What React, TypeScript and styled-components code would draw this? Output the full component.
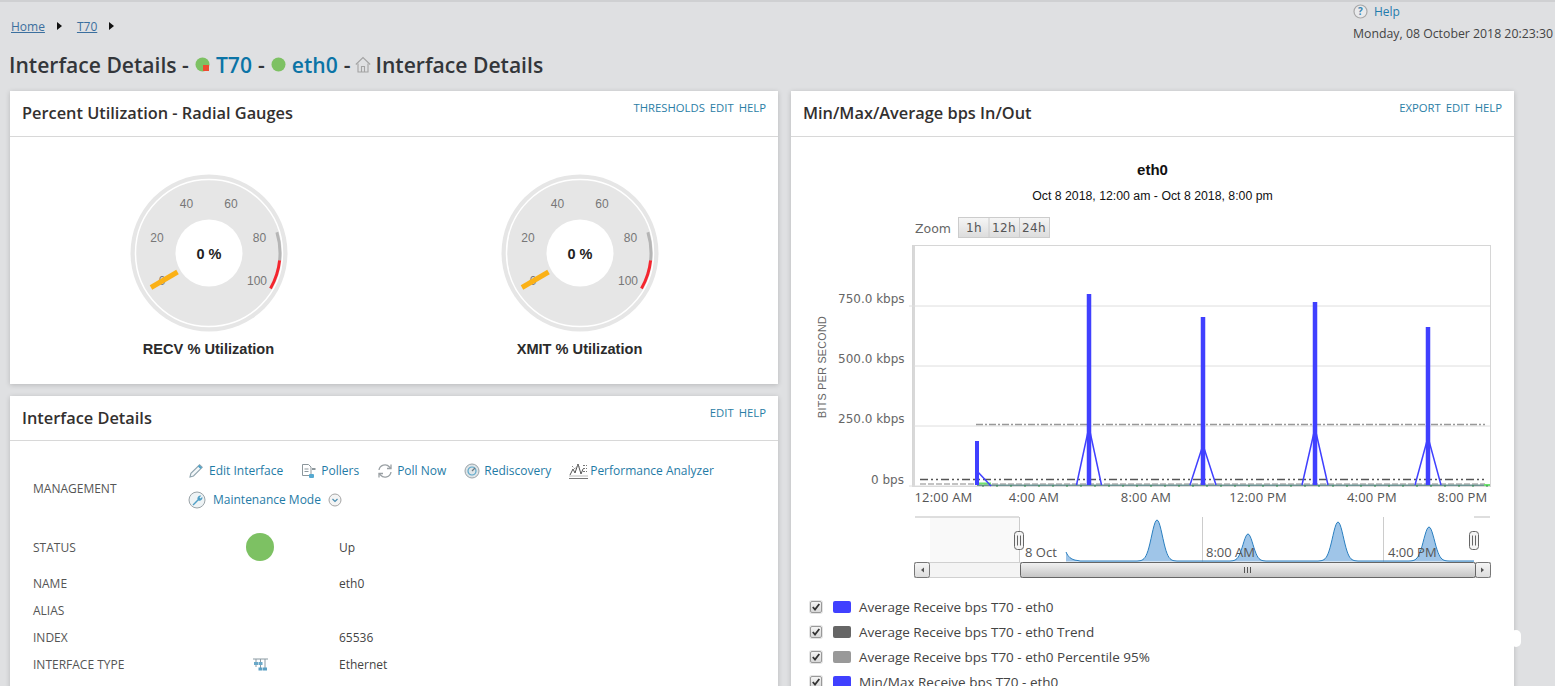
import React from "react";
import styled, { createGlobalStyle } from "styled-components";

const Global = createGlobalStyle`
  html, body { margin: 0; padding: 0; height: 100%; overflow: hidden; background: #dfe0e2; }
  body { font-family: "Open Sans", "Liberation Sans", sans-serif; color: #333; }
  a { text-decoration: none; }
`;

const Page = styled.div`
  height: 686px; overflow: hidden; position: relative; background: #dfe0e2;
  border-top: 2px solid #cfd0d2; box-sizing: border-box;
`;
const TopBar = styled.div`
  height: 48px; display: flex; justify-content: space-between; padding: 0 2px 0 11px;
`;
const Crumbs = styled.nav`
  display: flex; align-items: center; height: 14px; margin-top: 17px; font-size: 12px;
`;
const CrumbLink = styled.a`
  color: #3b6f9e; text-decoration: underline;
`;
const CrumbArrow = styled.span`
  width: 0; height: 0; margin: 0 15px 0 12px; border-left: 5px solid #111;
  border-top: 4px solid transparent; border-bottom: 4px solid transparent;
`;
const TopRight = styled.div`
  display: flex; flex-direction: column; gap: 7px; padding-top: 1px; font-size: 12.3px; width: 200px;
`;
const HelpRow = styled.a`
  display: flex; align-items: center; gap: 6px; color: #1f7cad; height: 16px; font-size: 12px;
`;
const DateText = styled.div`
  color: #444; white-space: nowrap; height: 16px; line-height: 16px;
`;
const TitleRow = styled.h1`
  margin: 0; height: 41px; padding: 0 0 13px 9px; display: flex; align-items: center; gap: 6px;
  box-sizing: border-box;
  font-size: 21.1px; font-weight: 600; color: #33363a; white-space: nowrap;
`;
const TitleLink = styled.a`
  color: #0b74a6;
`;
const TitleHome = styled.span`
  display: flex; margin-left: -2px; margin-right: -1px;
`;
const Columns = styled.div`
  display: grid; grid-template-columns: 768px 723px; column-gap: 13px; padding-left: 10px;
  height: 595px; align-items: stretch;
`;
const LeftColumn = styled.div`
  display: flex; flex-direction: column; gap: 12px; min-height: 0;
`;
const Panel = styled.section<{ $grow?: boolean }>`
  background: #fff; box-shadow: 0 1px 5px rgba(0,0,0,.18);
  ${p => (p.$grow ? "flex: 1; min-height: 0;" : "")}
`;
const PanelHeader = styled.header<{ $height?: number }>`
  height: ${p => p.$height ?? 45}px; display: flex; justify-content: space-between; padding: 0 12px;
  border-bottom: 1px solid #d8d8d8;
`;
const PanelTitle = styled.h2`
  margin: 12px 0 0; font-size: 16.35px; line-height: 20px; font-weight: 600; color: #33302f;
`;
const PanelActions = styled.div`
  display: flex; gap: 5px; padding-top: 9px; font-size: 11.3px; line-height: 15px; color: #2b7ea6;
`;
const GaugeGrid = styled.div`
  display: grid; grid-template-columns: 371px 371px; padding: 36px 0 0 13px; height: 211px;
`;
const GaugeCell = styled.figure`
  margin: 0; display: flex; flex-direction: column; align-items: center;
`;
const GaugeCaption = styled.figcaption`
  margin-top: 6px; font: bold 14.6px/20px "Liberation Sans", Arial, sans-serif; color: #2b2b2b;
`;
const GaugeTick = styled.text`
  font: 12px "Liberation Sans", Arial, sans-serif; fill: #777; text-anchor: middle;
`;
const GaugeValue = styled.text`
  font: bold 14.5px "Liberation Sans", Arial, sans-serif; fill: #222; text-anchor: middle;
`;
const DetailsBody = styled.div`
  padding: 15px 0 0 23px; font-size: 12px; color: #444;
`;
const MgmtRow = styled.div`
  display: grid; grid-template-columns: 155px 1fr; margin-bottom: 19px;
`;
const RowLabel = styled.div`
  font-size: 12px; color: #555; text-transform: uppercase;
`;
const MgmtLabel = styled(RowLabel)`
  align-self: center; padding-top: 6px;
`;
const ActionLine = styled.div`
  display: flex; gap: 18px; height: 29px; align-items: center;
`;
const ActionLink = styled.a<{ $gap?: number }>`
  display: flex; align-items: center; gap: ${p => p.$gap ?? 4}px; color: #1f7ba6; white-space: nowrap; font-size: 12px;
`;
const InfoRow = styled.div<{ $tall?: boolean }>`
  display: grid; grid-template-columns: 213px 28px 1fr; align-items: center;
  height: ${p => (p.$tall ? 28 : 27)}px; margin-bottom: ${p => (p.$tall ? 9 : 0)}px;
`;
const InfoValue = styled.div`
  padding-left: 65px; color: #444;
`;
const StatusDot = styled.span`
  display: block; width: 28px; height: 28px; border-radius: 50%; background: #7dc163;
`;
const IconCell = styled.div`
  display: flex; justify-content: center;
`;
const ChartBody = styled.div`
  padding-top: 24px; display: flex; flex-direction: column;
`;
const ChartTitle = styled.div`
  text-align: center; font: bold 15px/18px "Liberation Sans", Arial, sans-serif; color: #111;
`;
const ChartSub = styled.div`
  text-align: center; margin-top: 8px; font: 12.3px/18px "Liberation Sans", Arial, sans-serif; color: #111;
`;
const ChartSvg = styled.svg`
  display: block; margin-top: 5px;
`;
const AxisText = styled.text`
  font: 12px "DejaVu Sans", sans-serif; fill: #666;
`;
const XText = styled.text`
  font: 13px "Open Sans", sans-serif; fill: #555; text-anchor: middle; letter-spacing: .2px;
`;
const NavText = styled.text`
  font: 13px "Open Sans", sans-serif; fill: #555;
`;
const AxisTitle = styled.text`
  font: 10.7px "Liberation Sans", Arial, sans-serif; fill: #666; text-anchor: middle; letter-spacing: .3px;
`;
const ZoomLabel = styled.text`
  font: 12.5px "DejaVu Sans", sans-serif; fill: #666;
`;
const ZoomBtnText = styled.text`
  font: 12px "DejaVu Sans", sans-serif; fill: #555; text-anchor: middle; letter-spacing: .3px;
`;
const Legend = styled.ul`
  list-style: none; margin: 0; padding: 9px 0 0 19px;
`;
const LegendRow = styled.li`
  display: flex; align-items: center; height: 25px; font-size: 13.5px; color: #444;
`;
const FakeCheck = styled.span`
  width: 12px; height: 12px; border: 1px solid #999; border-radius: 2px; box-sizing: border-box;
  background: linear-gradient(#f4f4f4, #d8d8d8); display: flex; align-items: center; justify-content: center;
  margin-right: 11px; box-shadow: 0 0 0 1px #e4e4e4;
`;
const Swatch = styled.span<{ $color: string }>`
  width: 18px; height: 12px; border-radius: 2px; background: ${p => p.$color}; margin-right: 8px;
`;
const EdgeBlob = styled.div`
  position: absolute; left: 1511px; top: 628px; width: 10px; height: 17px; border-radius: 5px; background: #fff;
`;

const polar = (r: number, deg: number) => {
  const a = (deg * Math.PI) / 180;
  return [r * Math.cos(a), r * Math.sin(a)];
};
const arc = (r: number, from: number, to: number) => {
  const [x1, y1] = polar(r, from);
  const [x2, y2] = polar(r, to);
  return `M${x1.toFixed(2)} ${y1.toFixed(2)}A${r} ${r} 0 0 1 ${x2.toFixed(2)} ${y2.toFixed(2)}`;
};

const ticks: [string, number, number][] = [
  ["0", -47, 32], ["20", -52, -11], ["40", -22.5, -45], ["60", 22, -45], ["80", 50.5, -11], ["100", 48, 32],
];

const Gauge = ({ caption }: { caption: string }) => (
  <GaugeCell>
    <svg width="160" height="160" viewBox="-80 -80 160 160">
      <circle r="78.500" fill="#e6e6e6" />
      <circle r="73.500" fill="none" stroke="#fff" strokeWidth="1.500" />
      {ticks.map(([t, x, y]) => <GaugeTick key={t} x={x} y={y}>{t}</GaugeTick>)}
      <circle r="33.500" fill="#fff" />
      <path d={arc(71, -17, 6)} fill="none" stroke="#b5b5b5" strokeWidth="3" />
      <path d={arc(71, 6, 30)} fill="none" stroke="#f4262f" strokeWidth="3" />
      <path d="M-58 34.500L-31.500 19" stroke="#fbb116" strokeWidth="5" />
      <GaugeValue x="0" y="6">0 %</GaugeValue>
    </svg>
    <GaugeCaption>{caption}</GaugeCaption>
  </GaugeCell>
);

const IconPencil = () => (
  <svg width="16" height="16" viewBox="0 0 16 16" fill="none">
    <path d="M2 14l.9-3.600L11.600 1.800l2.600 2.500-8.700 8.700z" stroke="#8fa3ad" strokeWidth="1.100" fill="#f3f7f9" />
    <path d="M10.600 2.800l2.600 2.500" stroke="#4ba3cb" strokeWidth="2" />
  </svg>
);
const IconPollers = () => (
  <svg width="16" height="16" viewBox="0 0 16 16" fill="none">
    <path d="M1.500 1.500h6l2.500 2.500v8.500h-8.500z" stroke="#8d979c" strokeWidth="1" />
    <path d="M3.500 6h4M3.500 8.500h4" stroke="#8d979c" />
    <rect x="11" y="5" width="3.500" height="2" fill="#8d979c" />
    <rect x="8" y="11" width="5" height="4" rx="1" fill="#56a9d0" />
  </svg>
);
const IconPoll = () => (
  <svg width="16" height="16" viewBox="0 0 16 16" fill="none" stroke="#9aa0a4" strokeWidth="1.300">
    <path d="M2 7a6 6 0 0 1 10.500-3l1.500 1.500M14 9a6 6 0 0 1-10.500 3L2 10.500" />
    <path d="M14 1.500v4h-4M2 14.500v-4h4" />
  </svg>
);
const IconRediscover = () => (
  <svg width="16" height="16" viewBox="0 0 16 16" fill="none">
    <circle cx="8" cy="8" r="7" fill="#dfe5e8" stroke="#9aa3a8" />
    <circle cx="8" cy="8" r="4" stroke="#5aa7ca" strokeWidth="1.200" />
    <path d="M8 8l3-3" stroke="#6f7a80" strokeWidth="1.300" />
  </svg>
);
const IconPerf = () => (
  <svg width="19" height="16" viewBox="0 0 19 16" fill="none" stroke="#555" strokeWidth="1">
    <path d="M0 15.500h19" stroke="#777" />
    <path d="M0 13h19" stroke="#bbb" />
    <path d="M1 12l3-6 2 4 3-9 3 10 2-5" />
    <path d="M3 3l3 3 3-4 2 3" stroke="#888" strokeDasharray="1.500 1" />
    <path d="M14 2.500h4M14 5.500h4M14 8.500h4" stroke="#777" strokeDasharray="2 1" />
  </svg>
);
const IconWrench = () => (
  <svg width="18" height="18" viewBox="0 0 18 18" fill="none">
    <circle cx="9" cy="9" r="8" fill="#eef3f5" stroke="#9aa3a8" />
    <path d="M4.500 13.500l5-5a3 3 0 0 1 3.800-3.800L11.500 6.500l1 1 1.800-1.800a3 3 0 0 1-3.800 3.800l-5 5z" fill="#4f9fc6" />
  </svg>
);
const IconChevronCircle = () => (
  <svg width="14" height="14" viewBox="0 0 14 14" fill="none">
    <circle cx="7" cy="7" r="6" fill="#f4f4f4" stroke="#a5a5a5" />
    <path d="M4.500 6l2.500 2.500L9.500 6" stroke="#4a8db0" strokeWidth="1.200" />
  </svg>
);
const IconNetwork = () => (
  <svg width="15" height="13" viewBox="0 0 15 13" fill="none">
    <path d="M0 1h15" stroke="#8a9aa3" />
    <path d="M3 1v3M7.500 1v3M12 1v9M3 7v2M7.500 7v3" stroke="#8a9aa3" />
    <rect x="1" y="4" width="4" height="3" fill="#6aa8c8" />
    <rect x="5.500" y="4" width="4" height="3" fill="#6aa8c8" />
    <rect x="5.500" y="9.500" width="4" height="3" fill="#5b9fc3" />
    <rect x="10" y="9.500" width="4" height="3" fill="#5b9fc3" />
  </svg>
);
const IconHelp = () => (
  <svg width="15" height="15" viewBox="0 0 15 15">
    <circle cx="7.500" cy="7.500" r="6.500" fill="#e9eaec" stroke="#a8a8a8" strokeWidth="1.200" />
    <text x="7.500" y="11" textAnchor="middle" fontSize="10" fontWeight="700" fontFamily="Open Sans" fill="#3a87b3">?</text>
  </svg>
);
const IconHome = () => (
  <svg width="16" height="17" viewBox="0 0 16 17" fill="none" stroke="#a3a3a3" strokeWidth="1.100">
    <path d="M.8 8.500L8 1.500l7.200 7" />
    <path d="M3 7.500v8.500h10V7.500M6.500 16v-5.500h3V16" />
  </svg>
);
const Dot = ({ alarm }: { alarm?: boolean }) => (
  <svg width="15" height="15" viewBox="0 0 15 15">
    <circle cx="7.500" cy="7.500" r="7" fill="#7dc163" />
    {alarm && <rect x="8" y="8" width="6" height="6" fill="#ee4b30" />}
  </svg>
);
const TinyCheck = () => (
  <svg width="10" height="10" viewBox="0 0 10 10" fill="none">
    <path d="M1.800 5l2.200 2.500L8.300 2" stroke="#333" strokeWidth="1.800" />
  </svg>
);

const spikes = [
  { x: 1089, top: 294, peak: 427, w: 12.5 },
  { x: 1203, top: 317, peak: 445, w: 13 },
  { x: 1315, top: 302, peak: 428, w: 13 },
  { x: 1428, top: 327, peak: 437, w: 13 },
];

const bumps = [
  { c: 1157, a: 41, s: 6.5 },
  { c: 1248, a: 27, s: 6 },
  { c: 1338, a: 39, s: 6.5 },
  { c: 1429, a: 34, s: 6.5 },
];
const navY = (x: number) => {
  let v = 561;
  if (x < 1080) v -= 9 * Math.exp(-(x - 1066) / 4);
  bumps.forEach(b => { v -= b.a * Math.exp(-(((x - b.c) / b.s) ** 2) / 1.4); });
  return v;
};
const navLine = (() => {
  const p: string[] = [];
  for (let x = 1066; x <= 1474; x += 1) p.push(`${x} ${navY(x).toFixed(1)}`);
  return "M" + p.join("L");
})();

const greenTicks = Array.from({ length: 37 }, (_, i) => 983 + i * 14);

const Chart = () => (
  <ChartSvg width="723" height="375" viewBox="791 210 723 375">
    <defs>
      <linearGradient id="btn" x1="0" x2="0" y1="0" y2="1">
        <stop offset="0" stopColor="#f6f6f6" />
        <stop offset="1" stopColor="#dcdcdc" />
      </linearGradient>
      <linearGradient id="thumb" x1="0" x2="0" y1="0" y2="1">
        <stop offset="0" stopColor="#f2f2f2" />
        <stop offset="1" stopColor="#c4c4c4" />
      </linearGradient>
    </defs>

    <ZoomLabel x="915" y="233">Zoom</ZoomLabel>
    <rect x="958.500" y="217.500" width="91" height="20" fill="url(#btn)" stroke="#ccc" />
    <path d="M989 217v21M1019.500 217v21" stroke="#ccc" />
    <ZoomBtnText x="974" y="232">1h</ZoomBtnText>
    <ZoomBtnText x="1004" y="232">12h</ZoomBtnText>
    <ZoomBtnText x="1034" y="232">24h</ZoomBtnText>

    <rect x="912.500" y="245.500" width="578" height="241" fill="#fff" stroke="#d6d6d6" />
    <path d="M914 246v240" stroke="#d8d8d8" strokeWidth="2" />
    <path d="M909 306h581M914 366h576M914 426h576M909 486h581" stroke="#dedede" />

    <AxisTitle transform="translate(826 367) rotate(-90)">BITS PER SECOND</AxisTitle>
    <AxisText x="838" y="303">750.0 kbps</AxisText>
    <AxisText x="838" y="363">500.0 kbps</AxisText>
    <AxisText x="838" y="423">250.0 kbps</AxisText>
    <AxisText x="871" y="484">0 bps</AxisText>

    <path d="M976 424.500H1485" stroke="#999" strokeWidth="1.500" strokeDasharray="7 2 2 2" />
    <path d="M920 479.500H1485" stroke="#555" strokeWidth="1.300" strokeDasharray="8 3 2 3 2 3" />
    <path d="M920 484H1485" stroke="#888" strokeWidth="1.200" strokeDasharray="6 2" />
    <path d="M977 485.300H1488" stroke="#6f9494" strokeWidth="1.500" />
    <path d="M977 483.500h14M1484 485h6" stroke="#6fe06f" strokeWidth="1.800" />
    {greenTicks.map(x => <path key={x} d={`M${x} 485v2`} stroke="#2d8a4a" />)}

    <path d="M977 441V485" stroke="#4040ff" strokeWidth="4" />
    <path d="M977 471L991 486" stroke="#4040ff" strokeWidth="1.500" fill="none" />
    {spikes.map(s => (
      <g key={s.x}>
        <path d={`M${s.x} ${s.top}V485`} stroke="#4040ff" strokeWidth="4.500" />
        <path d={`M${s.x - s.w} 485L${s.x} ${s.peak}L${s.x + s.w} 485`} stroke="#4040ff" strokeWidth="1.500" fill="none" />
      </g>
    ))}

    <XText x="943.500" y="502">12:00 AM</XText>
    <XText x="1034" y="502">4:00 AM</XText>
    <XText x="1146" y="502">8:00 AM</XText>
    <XText x="1258" y="502">12:00 PM</XText>
    <XText x="1372" y="502">4:00 PM</XText>
    <XText x="1462.500" y="502">8:00 PM</XText>

    <rect x="930" y="517" width="89" height="45" fill="#f9f9f9" />
    <path d="M915 517h104M1474 517h16" stroke="#d4d4d4" strokeWidth="1.500" />
    <path d="M1019.500 517v45" stroke="#ccc" />
    <path d="M1202.500 517v45M1383.500 517v45" stroke="#ccc" />
    <path d={`${navLine}L1474 561.500L1066 561.500Z`} fill="#9fc5e8" />
    <path d={navLine} fill="none" stroke="#2a7fc0" strokeWidth="1" />
    <NavText x="1025" y="557">8 Oct</NavText>
    <NavText x="1206" y="557">8:00 AM</NavText>
    <NavText x="1388" y="557">4:00 PM</NavText>

    <rect x="1014.500" y="531.500" width="9" height="18" rx="3" fill="#f4f4f4" stroke="#666" />
    <path d="M1017.500 535.500v10M1020.500 535.500v10" stroke="#666" />
    <rect x="1469.500" y="531.500" width="9" height="18" rx="3" fill="#f4f4f4" stroke="#666" />
    <path d="M1472.500 535.500v10M1475.500 535.500v10" stroke="#666" />

    <rect x="914.500" y="562.500" width="576" height="15" fill="#f4f4f4" stroke="#d0d0d0" />
    <rect x="914.500" y="562.500" width="15" height="15" rx="2" fill="url(#btn)" stroke="#777" />
    <path d="M924 567.500v5l-3-2.500z" fill="#555" />
    <rect x="1475.500" y="562.500" width="15" height="15" rx="2" fill="url(#btn)" stroke="#777" />
    <path d="M1481 567.500v5l3-2.500z" fill="#555" />
    <rect x="1020.500" y="562.500" width="455" height="15" rx="2" fill="url(#thumb)" stroke="#666" />
    <path d="M1244.500 567v6M1247.500 567v6M1250.500 567v6" stroke="#555" />
  </ChartSvg>
);

const legendItems: [string, string][] = [
  ["#4040ff", "Average Receive bps T70 - eth0"],
  ["#666666", "Average Receive bps T70 - eth0 Trend"],
  ["#999999", "Average Receive bps T70 - eth0 Percentile 95%"],
  ["#4040ff", "Min/Max Receive bps T70 - eth0"],
];

export default function App() {
  return (
    <Page>
      <Global />
      <TopBar>
        <Crumbs>
          <CrumbLink>Home</CrumbLink>
          <CrumbArrow />
          <CrumbLink>T70</CrumbLink>
          <CrumbArrow />
        </Crumbs>
        <TopRight>
          <HelpRow><IconHelp />Help</HelpRow>
          <DateText>Monday, 08 October 2018 20:23:30</DateText>
        </TopRight>
      </TopBar>
      <TitleRow>
        <span>Interface Details -</span>
        <Dot alarm />
        <TitleLink>T70</TitleLink>
        <span>-</span>
        <Dot />
        <TitleLink>eth0</TitleLink>
        <span>-</span>
        <TitleHome><IconHome /></TitleHome>
        <span>Interface Details</span>
      </TitleRow>
      <Columns>
        <LeftColumn>
          <Panel>
            <PanelHeader>
              <PanelTitle>Percent Utilization - Radial Gauges</PanelTitle>
              <PanelActions><span>THRESHOLDS</span><span>EDIT</span><span>HELP</span></PanelActions>
            </PanelHeader>
            <GaugeGrid>
              <Gauge caption="RECV % Utilization" />
              <Gauge caption="XMIT % Utilization" />
            </GaugeGrid>
          </Panel>
          <Panel $grow>
            <PanelHeader $height={44}>
              <PanelTitle>Interface Details</PanelTitle>
              <PanelActions><span>EDIT</span><span>HELP</span></PanelActions>
            </PanelHeader>
            <DetailsBody>
              <MgmtRow>
                <MgmtLabel>Management</MgmtLabel>
                <div>
                  <ActionLine>
                    <ActionLink $gap={5}><IconPencil />Edit Interface</ActionLink>
                    <ActionLink><IconPollers />Pollers</ActionLink>
                    <ActionLink><IconPoll />Poll Now</ActionLink>
                    <ActionLink><IconRediscover />Rediscovery</ActionLink>
                    <ActionLink $gap={2}><IconPerf />Performance Analyzer</ActionLink>
                  </ActionLine>
                  <ActionLine>
                    <ActionLink $gap={7}><IconWrench />Maintenance Mode<IconChevronCircle /></ActionLink>
                  </ActionLine>
                </div>
              </MgmtRow>
              <InfoRow $tall>
                <RowLabel>Status</RowLabel>
                <StatusDot />
                <InfoValue>Up</InfoValue>
              </InfoRow>
              <InfoRow><RowLabel>Name</RowLabel><span /><InfoValue>eth0</InfoValue></InfoRow>
              <InfoRow><RowLabel>Alias</RowLabel><span /><InfoValue /></InfoRow>
              <InfoRow><RowLabel>Index</RowLabel><span /><InfoValue>65536</InfoValue></InfoRow>
              <InfoRow>
                <RowLabel>Interface Type</RowLabel>
                <IconCell><IconNetwork /></IconCell>
                <InfoValue>Ethernet</InfoValue>
              </InfoRow>
            </DetailsBody>
          </Panel>
        </LeftColumn>
        <Panel>
          <PanelHeader>
            <PanelTitle>Min/Max/Average bps In/Out</PanelTitle>
            <PanelActions><span>EXPORT</span><span>EDIT</span><span>HELP</span></PanelActions>
          </PanelHeader>
          <ChartBody>
            <ChartTitle>eth0</ChartTitle>
            <ChartSub>Oct 8 2018, 12:00 am - Oct 8 2018, 8:00 pm</ChartSub>
            <Chart />
            <Legend>
              {legendItems.map(([c, t]) => (
                <LegendRow key={t}>
                  <FakeCheck><TinyCheck /></FakeCheck>
                  <Swatch $color={c} />
                  {t}
                </LegendRow>
              ))}
            </Legend>
          </ChartBody>
        </Panel>
      </Columns>
      <EdgeBlob />
    </Page>
  );
}
